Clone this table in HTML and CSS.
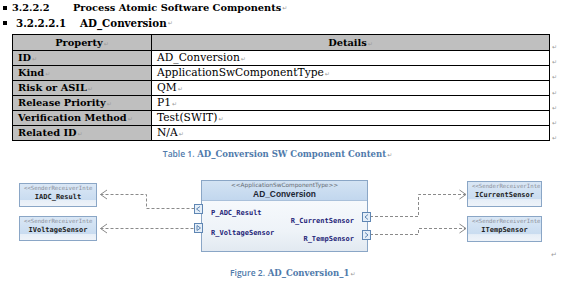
FILE: index.html
```html
<!DOCTYPE html>
<html>
<head>
<meta charset="utf-8">
<link rel="stylesheet" href="styles.css">
</head>
<body>
<div class="page">
  <div class="h h1"><span class="bullet"></span><span class="num">3.2.2.2</span><span class="title">Process Atomic Software Components</span><span class="pm">↵</span></div>
  <div class="h h2"><span class="bullet"></span><span class="num">3.2.2.2.1</span><span class="title">AD_Conversion</span><span class="pm">↵</span></div>

  <div class="tblwrap">
    <table class="props">
      <tr class="head"><td class="c1">Property<span class="pm">↵</span></td><td class="c2">Details<span class="pm">↵</span></td></tr>
      <tr><td class="c1">ID<span class="pm">↵</span></td><td class="c2">AD_Conversion<span class="pm">↵</span></td></tr>
      <tr><td class="c1">Kind<span class="pm">↵</span></td><td class="c2">ApplicationSwComponentType<span class="pm">↵</span></td></tr>
      <tr><td class="c1">Risk or ASIL<span class="pm">↵</span></td><td class="c2">QM<span class="pm">↵</span></td></tr>
      <tr><td class="c1">Release Priority<span class="pm">↵</span></td><td class="c2">P1<span class="pm">↵</span></td></tr>
      <tr><td class="c1">Verification Method<span class="pm">↵</span></td><td class="c2">Test(SWIT)<span class="pm">↵</span></td></tr>
      <tr><td class="c1">Related ID<span class="pm">↵</span></td><td class="c2">N/A<span class="pm">↵</span></td></tr>
    </table>
    <div class="marks">
      <span class="rowmark head">↵</span><span class="rowmark">↵</span><span class="rowmark">↵</span><span class="rowmark">↵</span><span class="rowmark">↵</span><span class="rowmark">↵</span><span class="rowmark">↵</span>
    </div>
  </div>

  <div class="caption"><span class="capsans">Table 1.</span> <span class="capbold">AD_Conversion SW Component Content</span><span class="pm">↵</span></div>

  <div class="diagram">
    <svg class="wires" width="565" height="90" viewBox="0 0 565 90">
      <g fill="none" stroke="#8a8a8a" stroke-width="1" stroke-dasharray="3 2">
        <path d="M100.5 19.5 H146.5 V33.5 H194"/>
        <path d="M100.5 53.5 H194"/>
        <path d="M370 41.5 H418.5 V19.5 H466"/>
        <path d="M370 59.5 H418.5 V53.5 H466"/>
      </g>
      <g fill="none" stroke="#8a8a8a" stroke-width="1">
        <path d="M107 15 L100.5 19.5 L107 24"/>
        <path d="M107 49 L100.5 53.5 L107 58"/>
        <path d="M459.5 15 L466 19.5 L459.5 24"/>
        <path d="M459.5 49 L466 53.5 L459.5 58"/>
      </g>
    </svg>

    <div class="iface" style="left:19px;top:8px;width:78px;height:24px">
      <div class="ster">&lt;&lt;SenderReceiverInte</div>
      <div class="iname">IADC_Result</div>
    </div>
    <div class="iface" style="left:19px;top:41px;width:78px;height:25px">
      <div class="ster">&lt;&lt;SenderReceiverInte</div>
      <div class="iname">IVoltageSensor</div>
    </div>
    <div class="iface" style="left:467px;top:6px;width:75px;height:26px">
      <div class="ster">&lt;&lt;SenderReceiverInte</div>
      <div class="iname">ICurrentSensor</div>
    </div>
    <div class="iface" style="left:467px;top:41px;width:75px;height:26px">
      <div class="ster">&lt;&lt;SenderReceiverInte</div>
      <div class="iname">ITempSensor</div>
    </div>

    <div class="comp">
      <div class="comphead">
        <div class="compster">&lt;&lt;ApplicationSwComponentType&gt;&gt;</div>
        <div class="compname">AD_Conversion</div>
      </div>
      <div class="compbody">
        <div class="pcol left">
          <div class="plabel">P_ADC_Result</div>
          <div class="plabel">R_VoltageSensor</div>
        </div>
        <div class="pcol right">
          <div class="plabel">R_CurrentSensor</div>
          <div class="plabel">R_TempSensor</div>
        </div>
      </div>
    </div>

    <svg class="port" style="left:194px;top:29px" width="9" height="10" viewBox="0 0 9 10"><rect x="0.5" y="0.5" width="8" height="9" fill="#e4eef8" stroke="#5f86b3"/><path d="M6 2.5 L2.5 5 L6 7.5" fill="none" stroke="#5f86b3"/></svg>
    <svg class="port" style="left:194px;top:48px" width="9" height="10" viewBox="0 0 9 10"><rect x="0.5" y="0.5" width="8" height="9" fill="#e4eef8" stroke="#5f86b3"/><path d="M3 2.5 L6.5 5 L3 7.5 Z" fill="none" stroke="#5f86b3"/></svg>
    <svg class="port" style="left:362px;top:37px" width="9" height="10" viewBox="0 0 9 10"><rect x="0.5" y="0.5" width="8" height="9" fill="#e4eef8" stroke="#5f86b3"/><path d="M6 2.5 L3 5 L6 7.5" fill="none" stroke="#5f86b3"/></svg>
    <svg class="port" style="left:362px;top:55px" width="9" height="10" viewBox="0 0 9 10"><rect x="0.5" y="0.5" width="8" height="9" fill="#e4eef8" stroke="#5f86b3"/><path d="M3 2.5 L6 5 L3 7.5" fill="none" stroke="#5f86b3"/></svg>

    <span class="figmark">↵</span>
  </div>

  <div class="figcap"><span class="capsans">Figure 2.</span> <span class="capbold">AD_Conversion_1</span><span class="pm">↵</span></div>
</div>
</body>
</html>
```

FILE: styles.css
```css
* { box-sizing: border-box; }
html, body { margin: 0; padding: 0; background: #ffffff; }
body { font-family: "DejaVu Serif", "Liberation Serif", serif; color: #000; }
.page { width: 565px; height: 283px; overflow: hidden; }

.pm { font-family: "DejaVu Sans", sans-serif; font-size: 6px; color: #9a9a9a; font-weight: normal; margin-left: 1px; }

.h { display: flex; align-items: center; height: 15px; font-weight: bold; }
.h1 { font-size: 9.8px; }
.h2 { font-size: 10.3px; }
.bullet { display: inline-block; width: 4px; height: 4px; background: #000; margin-left: 3px; margin-right: 5px; }
.h1 .num { width: 61px; }
.h2 .bullet { margin-right: 9px; }
.h2 .num { width: 64px; }

.tblwrap { display: flex; margin-top: 4px; margin-left: 12px; align-items: flex-start; }
.props { border-collapse: collapse; width: 538px; font-size: 10.7px; }
.props td { border: 1px solid #000; padding: 0 0 0 5px; height: 15px; line-height: 13px; white-space: nowrap; }
.props tr.head td { height: 16px; font-weight: bold; text-align: center; background: #bfbfbf; padding-left: 0; }
.props td.c1 { width: 139px; font-weight: bold; font-size: 9.8px; background: #bfbfbf; }
.props td.c2 { background: #fff; }
.props tr.head td.c2 { background: #bfbfbf; font-size: 9.8px; }

.marks { display: flex; flex-direction: column; padding-left: 2px; font-family: "DejaVu Sans", sans-serif; font-size: 6px; color: #9a9a9a; }
.rowmark { height: 15.2px; display: flex; align-items: flex-end; }
.rowmark.head { height: 16px; }

.caption { text-align: center; margin-top: 7px; margin-left: -10px; color: #4f7aab; font-size: 8.5px; height: 12px; line-height: 12px; }
.capsans { font-family: "Open Sans", "DejaVu Sans", sans-serif; font-weight: 600; }
.capbold { font-family: "DejaVu Serif", serif; font-weight: bold; }

.diagram { position: relative; height: 85px; margin-top: 15px; }
.wires { position: absolute; left: 0; top: 0; }
.iface { position: absolute; border: 1px solid #8aa6c6; background: linear-gradient(#dae7f5, #c9dcf0 72%, #e6eef7 73%, #eef3f9); padding: 1px 0 0 4px; }
.ster { font-family: "DejaVu Sans Mono", monospace; font-size: 5.7px; color: #8a8f99; line-height: 7px; white-space: nowrap; }
.iname { font-family: "DejaVu Sans Mono", monospace; font-weight: bold; font-size: 7px; color: #222; line-height: 10px; text-align: center; margin-left: -4px; white-space: nowrap; }

.comp { position: absolute; left: 201px; top: 5px; width: 167px; height: 72px; border: 1px solid #8aa6c6; display: flex; flex-direction: column; }
.comphead { height: 20px; background: linear-gradient(#d3e3f3, #c2d7ee); border-bottom: 1px solid #a9c0da; text-align: center; }
.compster { font-family: "DejaVu Sans", sans-serif; font-size: 5.8px; color: #666c75; line-height: 7px; padding-top: 1px; }
.compname { font-family: "Liberation Sans", "DejaVu Sans", sans-serif; font-weight: bold; font-size: 8.4px; color: #1c2633; line-height: 10px; }
.compbody { flex: 1; background: linear-gradient(#f6f9fc, #eef3f8 60%, #e2e9f1); display: flex; justify-content: space-between; }
.pcol { display: flex; flex-direction: column; }
.pcol.left { padding: 7px 0 0 9px; gap: 10px; }
.pcol.right { padding: 15px 13px 0 0; gap: 8px; align-items: flex-end; }
.plabel { font-family: "DejaVu Sans Mono", monospace; font-weight: bold; font-size: 7px; color: #1e2478; line-height: 10px; white-space: nowrap; }
.port { position: absolute; }
.figmark { position: absolute; left: 551px; top: 76px; font-family: "DejaVu Sans", sans-serif; font-size: 7px; color: #9a9a9a; }

.figcap { margin-left: 230px; margin-top: 7px; color: #4f7aab; font-size: 8.5px; height: 12px; line-height: 12px; }
```
